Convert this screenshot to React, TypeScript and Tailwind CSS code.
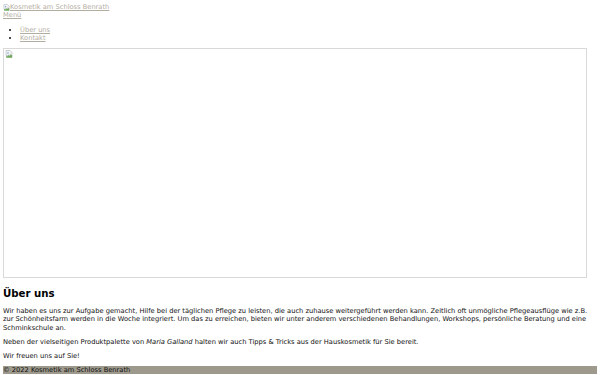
const linkCls = "text-[#b3ad9f] underline";

function BrokenImg({ className = "" }: { className?: string }) {
  return (
    <svg viewBox="0 0 16 16" className={className} aria-hidden>
      <path d="M2 1h8l4 4v4l-2 1-2-1-2 2-2-1-2 2-2-1z" fill="#f3f3f3" stroke="#9aa3ad" strokeWidth="1" />
      <path d="M3 15v-3l2 1 2-2 2 1 2-2 2 1 1-1v5z" fill="#6fae5a" stroke="#5b8d4a" strokeWidth="0.8" />
      <circle cx="6" cy="6" r="1.5" fill="#6aa0d8" />
    </svg>
  );
}

export default function App() {
  return (
    <div className="min-h-screen w-full bg-white px-[3px] pt-[3px] font-['DejaVu_Sans',sans-serif] text-[6.7px] leading-[8.3px] text-[#111]">
      {/* Header */}
      <header>
        <a href="#" className={`flex items-center ${linkCls}`}>
          <BrokenImg className="w-[7px] h-[7px]" />
          <span>Kosmetik am Schloss Benrath</span>
        </a>
        <a href="#" className={`block ${linkCls}`}>Menü</a>
        <ul className="mt-[6px] list-disc pl-[17px]">
          <li className="marker:text-[#111]"><a href="#" className={linkCls}>Über uns</a></li>
          <li className="marker:text-[#111]"><a href="#" className={linkCls}>Kontakt</a></li>
        </ul>
      </header>

      {/* Hero */}
      <div className="mt-[6px] h-[230px] w-[584px] border border-[#d9d9d9] pl-[1px] pt-[1px]">
        <BrokenImg className="w-[8px] h-[8px]" />
      </div>

      {/* Content */}
      <main className="mt-[10px]">
        <h2 className="text-[10.2px] leading-[12px] font-bold text-black">Über uns</h2>
        <p className="mt-[7px]">
          Wir haben es uns zur Aufgabe gemacht, Hilfe bei der täglichen Pflege zu leisten, die auch zuhause weitergeführt werden kann. Zeitlich oft unmögliche Pflegeausflüge wie z.B. zur Schönheitsfarm werden in die Woche integriert. Um das zu erreichen, bieten wir unter anderem verschiedenen Behandlungen, Workshops, persönliche Beratung und eine Schminkschule an.
        </p>
        <p className="mt-[6px]">
          Neben der vielseitigen Produktpalette von <em>Maria Galland</em> halten wir auch Tipps &amp; Tricks aus der Hauskosmetik für Sie bereit.
        </p>
        <p className="mt-[6px]">Wir freuen uns auf Sie!</p>
      </main>

      <footer className="mt-[5px] bg-[#9d998c] text-[#111]">© 2022 Kosmetik am Schloss Benrath</footer>
    </div>
  );
}
